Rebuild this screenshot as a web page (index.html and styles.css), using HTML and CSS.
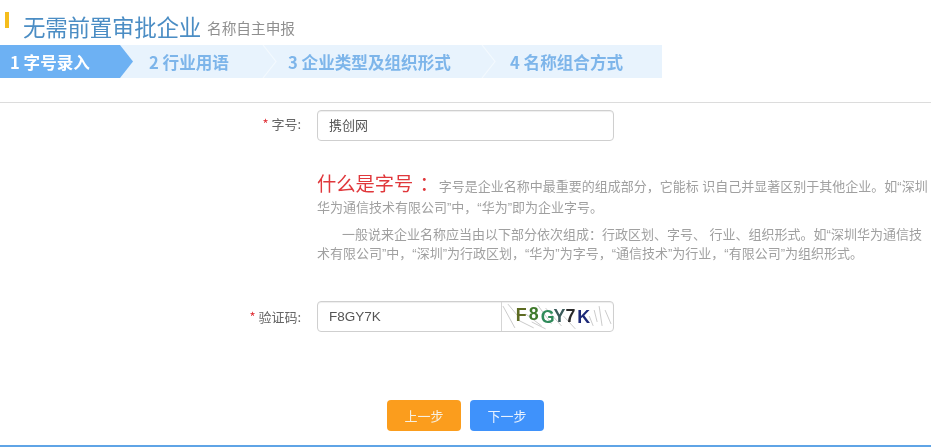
FILE: index.html
```html
<!DOCTYPE html>
<html lang="zh">
<head>
<meta charset="utf-8">
<title>无需前置审批企业</title>
<link rel="stylesheet" href="styles.css">
</head>
<body>
<div class="page">
  <header class="head">
    <span class="mark"></span>
    <h1 class="title">无需前置审批企业</h1>
    <span class="subtitle">名称自主申报</span>
  </header>
  <nav class="steps">
    <div class="step step-1 active">1 字号录入</div>
    <div class="step step-2">2 行业用语</div>
    <div class="step step-3">3 企业类型及组织形式</div>
    <div class="step step-4">4 名称组合方式</div>
    <svg class="chev chev-1" width="26" height="33" viewBox="0 0 26 33"><path d="M0 0 L13 0 L26 16.5 L13 33 L0 33 Z" fill="#6db1f3"/></svg>
    <svg class="chev chev-2" width="16" height="33" viewBox="0 0 16 33"><path d="M1 0 L14 16.5 L1 33" fill="none" stroke="#f3f9fe" stroke-width="1.2"/></svg>
    <svg class="chev chev-3" width="16" height="33" viewBox="0 0 16 33"><path d="M1 0 L14 16.5 L1 33" fill="none" stroke="#f3f9fe" stroke-width="1.2"/></svg>
  </nav>
  <main class="form">
    <div class="row row-name">
      <label class="label"><span class="req">*</span> 字号:</label>
      <div class="input">携创网</div>
    </div>
    <div class="row row-help">
      <div></div>
      <div class="help">
        <p class="help-a"><span class="help-title">什么是字号</span><span class="help-title help-colon">：</span><span class="help-lead">字号是企业名称中最重要的组成部分，它能标 识自己并显著区别于其他企业。如“深圳华为通信技术有限公司”中，“华为”即为企业字号。</span></p>
        <p class="help-b">一般说来企业名称应当由以下部分依次组成：行政区划、字号、 行业、组织形式。如“深圳华为通信技术有限公司”中，“深圳”为行政区划，“华为”为字号，“通信技术”为行业，“有限公司”为组织形式。</p>
      </div>
    </div>
    <div class="row row-code">
      <label class="label"><span class="req">*</span> 验证码:</label>
      <div class="input input-code">
        <span class="code-value">F8GY7K</span>
        <svg class="captcha" width="112" height="29" viewBox="0 0 112 29">
          <g fill="none" stroke="#b4b4b4" stroke-width="0.7">
            <path d="M1 4 L13 26 M6 2 L16 14 M16 18 L32 26 M24 12 L40 24 M36 3 L50 22 M44 6 L60 24 M62 14 L74 27"/>
            <path d="M93 8 L96 20 M98 4 L101 24 M104 8 L110 22 M88 14 L92 24 M30 20 L44 27"/>
          </g>
          <g class="captcha-text">
            <text x="14" y="19" fill="#5d6b22">F</text>
            <text x="27" y="18" fill="#3f7a2c">8</text>
            <text x="39" y="21" fill="#2f8a5a">G</text>
            <text x="52" y="20" fill="#3a5a5a">Y</text>
            <text x="64" y="20" fill="#2a2a2a">7</text>
            <text x="76" y="21" fill="#1d2a78">K</text>
          </g>
        </svg>
      </div>
    </div>
    <div class="actions">
      <button class="btn btn-prev" type="button">上一步</button>
      <button class="btn btn-next" type="button">下一步</button>
    </div>
  </main>
</div>
</body>
</html>
```
FILE: styles.css
```css
* { box-sizing: border-box; }
html, body { margin: 0; padding: 0; background: #fff; }
body { font-family: "Liberation Sans", "Noto Sans CJK SC", sans-serif; }
.page {
  width: 931px;
  height: 447px;
  overflow: hidden;
  border-bottom: 2px solid #5fa4e6;
  filter: blur(0.45px);
}
.head {
  height: 45px;
  padding: 12px 0 0 5px;
  display: flex;
  align-items: flex-start;
}
.mark { width: 4px; height: 16px; background: #f5bd1c; margin-right: 14px; }
.title {
  margin: 0;
  font-size: 22.5px;
  line-height: 28px;
  font-weight: 400;
  color: #4b8dc4;
  letter-spacing: -0.25px;
  font-family: "Noto Sans CJK SC", sans-serif;
}
.subtitle {
  margin: 6px 0 0 6px;
  font-size: 14.67px;
  line-height: 20px;
  color: #8f8f8f;
  font-family: "Noto Sans CJK SC", sans-serif;
}
.steps {
  width: 662px;
  height: 33px;
  background: #e8f3fd;
  display: flex;
  position: relative;
  margin-bottom: 24px;
  font-family: "Noto Sans CJK SC", "Liberation Sans", sans-serif;
}
.step {
  font-size: 16.6px;
  line-height: 34px;
  font-weight: 700;
  color: #7db5ea;
  white-space: nowrap;
  position: relative;
  z-index: 1;
}
.step.active { color: #fff; background: #6db1f3; }
.step-1 { width: 120px; padding-left: 10px; }
.step-2 { width: 159px; padding-left: 29px; }
.step-3 { width: 222px; padding-left: 9px; }
.step-4 { padding-left: 9px; }
.chev { position: absolute; top: 0; z-index: 1; }
.chev-1 { left: 107px; z-index: 2; }
.chev-2 { left: 262px; }
.chev-3 { left: 481px; }
.form { border-top: 1px solid #dcdcdc; padding-top: 7px; }
.row {
  display: grid;
  grid-template-columns: 301px 297px;
  column-gap: 16px;
}
.label {
  text-align: right;
  font-size: 13px;
  line-height: 28px;
  color: #666;
  font-family: "Noto Sans CJK SC", sans-serif;
}
.req { color: #e0343a; }
.input {
  height: 31px;
  border: 1px solid #cfcfcf;
  border-radius: 4px;
  padding-left: 11px;
  font-size: 13px;
  line-height: 27px;
  color: #555;
  background: #fff;
  font-family: "Noto Sans CJK SC", sans-serif;
  box-shadow: inset 0 1px 1px #eee;
}
.row-help { grid-template-columns: 301px 614px; margin-top: 30px; }
.help {
  font-size: 13px;
  line-height: 21px;
  color: #a0a0a0;
  font-family: "Liberation Sans", "Noto Sans CJK SC", sans-serif;
}
.help p { margin: 0; }
.help-title {
  font-size: 19.3px;
  line-height: 24px;
  color: #e0383c;
  font-family: "Noto Sans CJK SC", sans-serif;
}
.help-colon { margin-left: 6px; }
.help-a { margin-bottom: 7px !important; }
.help-b { text-indent: 25px; line-height: 19px; }
.row-code { margin-top: 38px; }
.row-code .label { line-height: 31px; }
.input-code {
  display: flex;
  align-items: center;
  justify-content: space-between;
  padding: 0 0 0 11px;
  font-family: "Liberation Sans", sans-serif;
  font-size: 13.5px;
  overflow: hidden;
}
.captcha { border-left: 1px solid #d5d5d5; display: block; flex: none; }
.captcha-text {
  font-family: "Liberation Sans", sans-serif;
  font-weight: 700;
  font-size: 18px;
}
.actions { display: flex; gap: 9px; padding-left: 387px; margin-top: 68px; }
.btn {
  width: 74px;
  height: 31px;
  border: 0;
  border-radius: 4px;
  color: #f7f0e0;
  font-size: 13px;
  padding: 0;
  font-family: "Noto Sans CJK SC", sans-serif;
}
.btn-prev { background: #fb9d1d; }
.btn-next { background: #3f92fb; color: #e8f2ff; }
```
